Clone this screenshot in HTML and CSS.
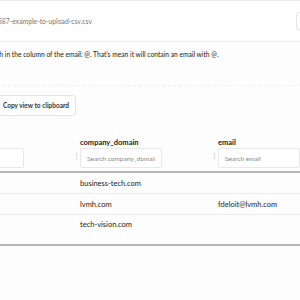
FILE: index.html
```html
<!DOCTYPE html>
<html lang="en">
<head>
    <meta charset="UTF-8">
    <title>CSV preview</title>
    <link rel="stylesheet" href="styles.css">
</head>
<body>
    <div class="page">
        <div class="file-box">
            <span class="file-name">10587-example-to-upload-csv.csv</span>
            <span class="file-action"></span>
        </div>
        <p class="hint">Each in the column of the email: @. That's mean it will contain an email with @.</p>
        <div class="toolbar">
            <button class="copy-btn">Copy view to clipboard</button>
        </div>
        <table class="grid">
            <thead>
                <tr>
                    <th>
                        <span class="col-name">name</span>
                        <input class="search" placeholder="Search name">
                    </th>
                    <th>
                        <span class="handle">&#8942;</span>
                        <span class="col-name">company_domain</span>
                        <input class="search" placeholder="Search company_domain">
                    </th>
                    <th>
                        <span class="handle">&#8942;</span>
                        <span class="col-name">email</span>
                        <input class="search" placeholder="Search email">
                    </th>
                </tr>
            </thead>
            <tbody>
                <tr><td></td><td>business-tech.com</td><td></td></tr>
                <tr><td></td><td>lvmh.com</td><td>fdeloit@lvmh.com</td></tr>
                <tr class="last"><td></td><td>tech-vision.com</td><td></td></tr>
            </tbody>
        </table>
    </div>
</body>
</html>
```

FILE: styles.css
```css
body {
    margin: 0;
    background: #fdfdfd;
    font-family: 'Lato', 'Liberation Sans', sans-serif;
    color: #222;
    overflow: hidden;
}

.page {
    margin-left: -58px;
    width: 420px;
}

.file-box {
    display: flex;
    align-items: center;
    height: 40px;
    border-top: 1px solid #ececec;
    border-bottom: 1px solid #ececec;
    padding-left: 48px;
    background: #fefefe;
}

.file-name {
    font-size: 6.8px;
    color: #777;
}

.file-action {
    width: 60px;
    height: 16px;
    border: 1px solid #e6e6e6;
    border-radius: 3px;
    margin-right: 4px;
    margin-left: auto;
}

.hint {
    margin: 8px 0 0 47px;
    font-size: 6.7px;
    color: #222;
    white-space: nowrap;
}

.toolbar {
    margin-top: 27px;
    padding-top: 6px;
    border-top: 1px dashed #f0f0f0;
}

.copy-btn {
    margin-left: 54px;
    height: 21px;
    padding: 0 6px;
    font-family: inherit;
    font-size: 6.5px;
    font-weight: 700;
    color: #333;
    background: #fff;
    border: 1px solid #e4e4e4;
    border-radius: 3px;
}

.grid {
    margin-top: 22px;
    border-collapse: collapse;
    table-layout: fixed;
    width: 414px;
}

.grid th,
.grid td {
    width: 138px;
    text-align: left;
    padding: 0;
}

.grid th {
    position: relative;
    padding-bottom: 3px;
    border-bottom: 2px solid #b5b5b5;
}

.col-name {
    display: block;
    font-size: 7.5px;
    line-height: 9px;
    font-weight: 700;
    color: #222;
    margin-bottom: 1px;
}

.search {
    display: block;
    box-sizing: border-box;
    width: 82px;
    height: 20px;
    margin: 0;
    padding: 0 6px;
    font-family: inherit;
    font-size: 6.5px;
    border: 1px solid #e8e8e8;
    border-radius: 2px;
    background: #fff;
}

.search::placeholder {
    color: #888;
}

.handle {
    position: absolute;
    left: -7px;
    top: 13px;
    font-size: 7px;
    color: #ccc;
}

.grid td {
    height: 20px;
    font-size: 7.5px;
    color: #222;
    border-bottom: 1px solid #ececec;
}

.grid tr.last td {
    height: 30px;
    vertical-align: top;
    padding-top: 5px;
    box-sizing: border-box;
    border-bottom: 2px solid #b5b5b5;
}
```
